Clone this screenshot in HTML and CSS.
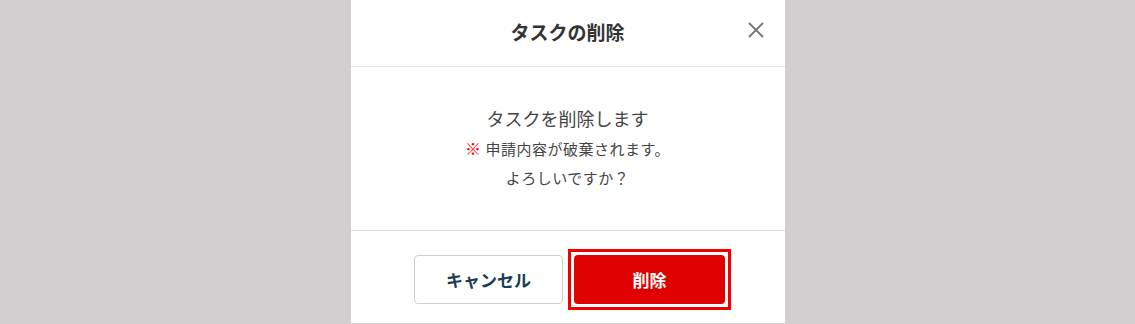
FILE: index.html
```html
<!DOCTYPE html>
<html lang="ja">
<head>
<meta charset="utf-8">
<title>タスクの削除</title>
<link rel="stylesheet" href="styles.css">
</head>
<body>
<div class="overlay">
  <div class="modal">
    <div class="modal-header">
      <h2 class="modal-title">タスクの削除</h2>
      <button class="close-btn" aria-label="閉じる">
        <svg width="16" height="16" viewBox="0 0 16 16"><path d="M1 1 L15 15 M15 1 L1 15" stroke="#777" stroke-width="1.8" fill="none"/></svg>
      </button>
    </div>
    <div class="modal-body">
      <p class="msg-main">タスクを削除します</p>
      <p class="msg-sub"><span class="mark">※</span> 申請内容が破棄されます。</p>
      <p class="msg-sub">よろしいですか？</p>
    </div>
    <div class="modal-footer">
      <button class="btn btn-cancel">キャンセル</button>
      <span class="focus-ring"><button class="btn btn-delete">削除</button></span>
    </div>
  </div>
</div>
</body>
</html>
```
FILE: styles.css
```css
* { box-sizing: border-box; }
html, body {
  margin: 0;
  padding: 0;
  height: 100%;
}
body {
  background: #d1cfcf;
  font-family: "Noto Sans CJK JP", "Noto Sans", sans-serif;
  overflow: hidden;
}
.overlay {
  display: flex;
  justify-content: center;
  height: 324px;
}
.modal {
  width: 434px;
  background: #fff;
  display: flex;
  flex-direction: column;
  height: 324px;
  border-bottom: 1px solid #d8d8d8;
}
.modal-header {
  height: 67px;
  border-bottom: 1px solid #e2e2e2;
  display: flex;
  align-items: center;
  justify-content: center;
  position: relative;
}
.modal-title {
  margin: 0;
  font-size: 19px;
  font-weight: 700;
  color: #333;
  line-height: 1;
  margin-top: -3px;
}
.close-btn {
  position: absolute;
  right: 21px;
  top: 22px;
  width: 16px;
  height: 16px;
  padding: 0;
  border: none;
  background: none;
  display: flex;
}
.modal-body {
  height: 164px;
  border-bottom: 1px solid #dcdcdc;
  display: flex;
  flex-direction: column;
  align-items: center;
  justify-content: center;
  padding-bottom: 2px;
}
.modal-body p {
  margin: 0;
  height: 30px;
  line-height: 30px;
  color: #444;
}
.msg-main {
  font-size: 18px;
}
.msg-sub {
  font-size: 15px;
  letter-spacing: 0.5px;
}
.mark {
  color: #ff0000;
  font-weight: 700;
  font-size: 16px;
}
.modal-footer {
  flex: 1;
  display: flex;
  justify-content: center;
  align-items: flex-start;
  gap: 5px;
  padding-top: 18px;
  padding-left: 10px;
}
.btn {
  width: 149px;
  height: 49px;
  border-radius: 4px;
  font-family: "Noto Sans CJK JP", "Noto Sans", sans-serif;
  font-size: 17px;
  font-weight: 700;
  cursor: pointer;
}
.btn-cancel {
  margin-top: 6px;
  background: #fff;
  border: 1px solid #cfcfcf;
  color: #1c3c55;
}
.focus-ring {
  display: flex;
  border: 3px solid #f00000;
  padding: 3px;
}
.btn-delete {
  width: 151px;
  background: #e00000;
  border: none;
  color: #fff;
}
```
